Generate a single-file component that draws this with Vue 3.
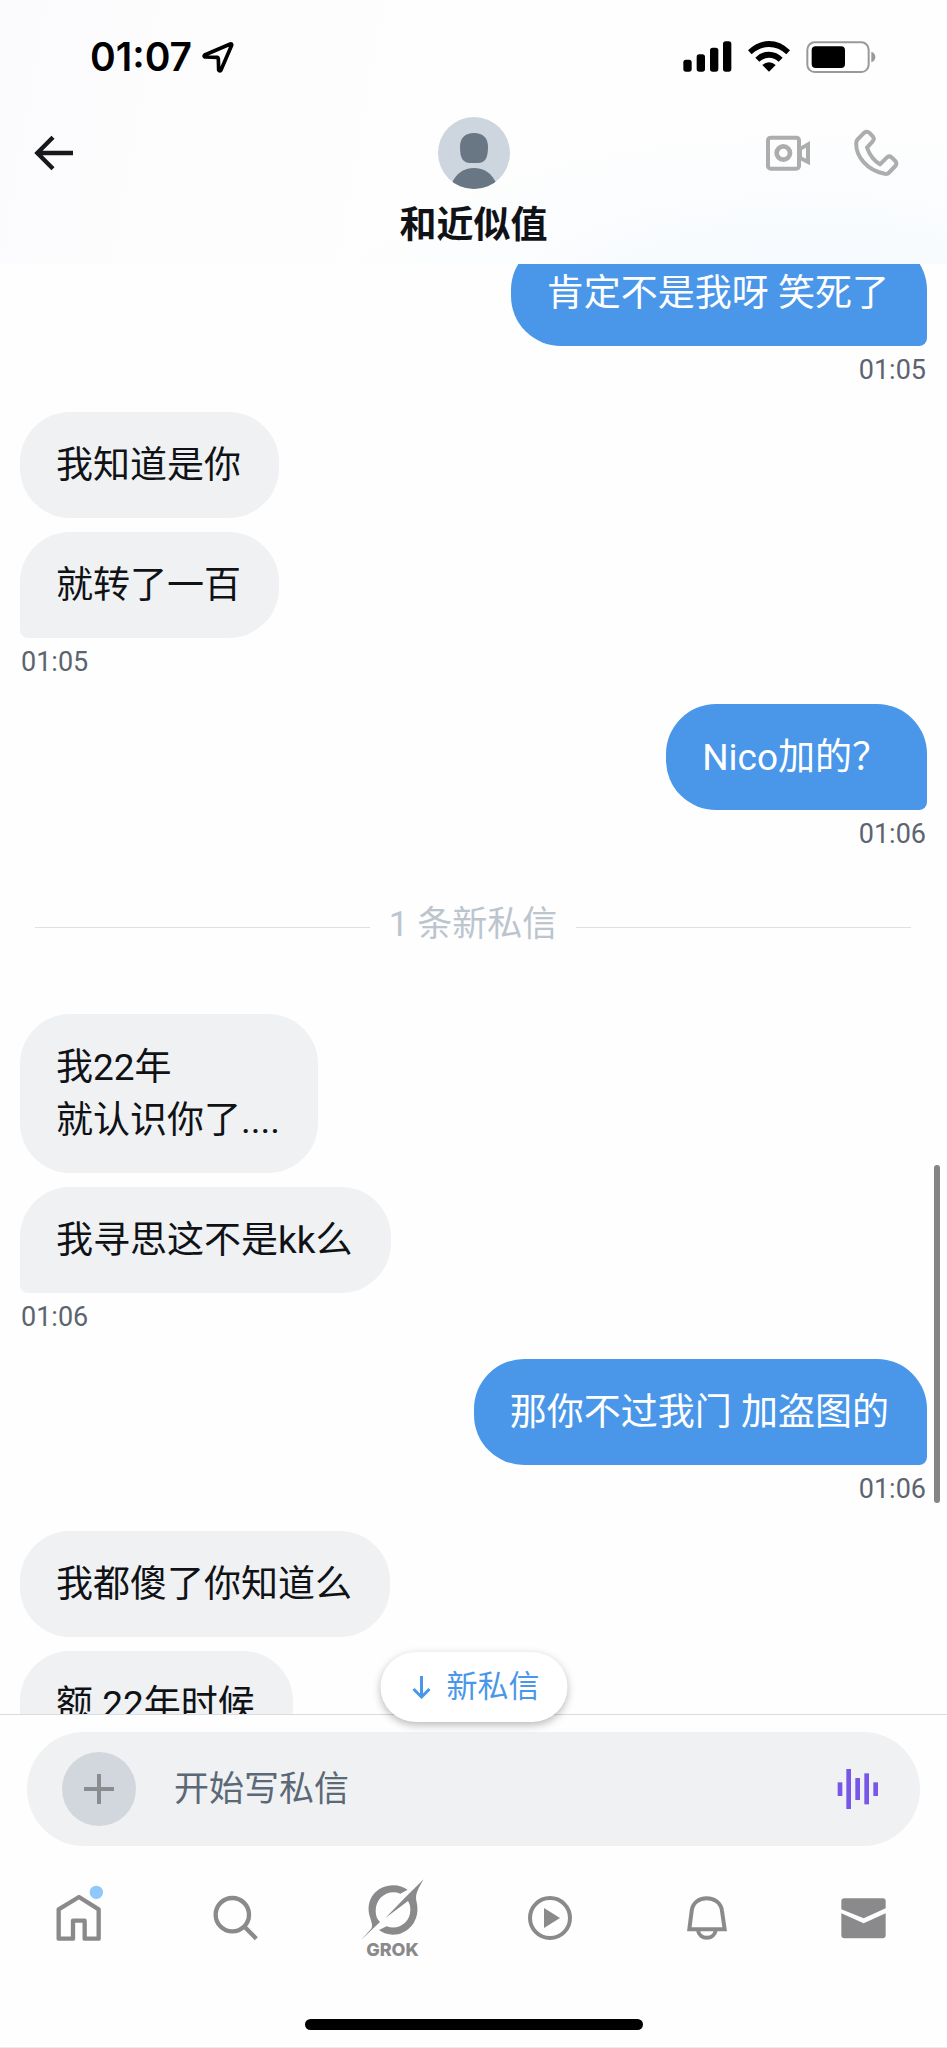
<script setup>
import { ref } from 'vue'

const draft = ref('')

const thread = [
  { id: 1, side: 'out', bubbles: ['肯定不是我呀 笑死了'], time: '01:05' },
  { id: 2, side: 'in', bubbles: ['我知道是你', '就转了一百'], time: '01:05' },
  { id: 3, side: 'out', bubbles: ['Nico加的？'], time: '01:06' },
  { id: 4, divider: '1 条新私信' },
  { id: 5, side: 'in', bubbles: ['我22年\n就认识你了....', '我寻思这不是kk么'], time: '01:06' },
  { id: 6, side: 'out', bubbles: ['那你不过我门 加盗图的'], time: '01:06' },
  { id: 7, side: 'in', bubbles: ['我都傻了你知道么', '额 22年时候'], time: '' },
]
</script>

<template>
  <div class="screen">
    <header class="header">
      <div class="status">
        <div class="clock">
          <span>01:07</span>
          <svg width="32" height="32" viewBox="0 0 96 96" aria-hidden="true">
            <path d="M85 9 L8 42 Q4 46 9 48 L46 49 Q49 50 49 53 L50 87 Q53 92 57 87 L89 13 Q90 8 85 9 Z" fill="none" stroke="#000" stroke-width="11" stroke-linejoin="round" />
          </svg>
        </div>
        <div class="signals">
          <svg width="49" height="31" viewBox="0 0 147 93" aria-hidden="true">
            <rect x="1" y="56" width="25" height="36" rx="8" />
            <rect x="41" y="40" width="25" height="52" rx="8" />
            <rect x="81" y="20" width="25" height="72" rx="8" />
            <rect x="120" y="1" width="25" height="91" rx="8" />
          </svg>
          <svg width="42" height="31" viewBox="0 0 126 93" aria-hidden="true">
            <path d="M0 28 Q28 0 63 0 Q98 0 126 28 L115 40 Q92 18 63 18 Q34 18 11 40 Z" />
            <path d="M22 50 Q39 32 63 32 Q87 32 104 50 L92 62 Q79 50 63 50 Q47 50 34 62 Z" />
            <path d="M43 72 Q52 64 63 64 Q74 64 83 72 L63 92 Z" />
          </svg>
          <svg width="70" height="32" viewBox="0 0 210 96" aria-hidden="true">
            <rect x="4" y="4" width="184" height="89" rx="22" fill="#fff" stroke="#999" stroke-width="6" />
            <rect x="17" y="16" width="100" height="65" rx="12" />
            <path d="M196 32 Q208 36 208 48 Q208 60 196 64 Z" fill="#999" />
          </svg>
        </div>
      </div>
      <div class="titlebar">
        <button class="icon-button back" type="button" aria-label="返回">
          <svg width="40" height="36" viewBox="0 0 120 108" aria-hidden="true">
            <path d="M117 54 H12 M57 7 L10 54 L57 101" fill="none" stroke="#16181c" stroke-width="13" />
          </svg>
        </button>
        <div class="person">
          <svg width="72" height="72" viewBox="0 0 72 72" aria-hidden="true">
            <defs><clipPath id="avatar-clip"><circle cx="36" cy="36" r="36" /></clipPath></defs>
            <g clip-path="url(#avatar-clip)">
              <rect width="72" height="72" fill="#cdd5de" />
              <path d="M36 16 C45 16 50 21 50 30 C50 41 47 46 40 46 H32 C25 46 22 41 22 30 C22 21 27 16 36 16 Z" fill="#697684" />
              <path d="M13 68 C18 56 26 51 36 51 C46 51 54 56 59 68 V74 H13 Z" fill="#697684" />
            </g>
          </svg>
          <h1 class="name">和近似值</h1>
        </div>
        <div class="actions">
          <button class="icon-button" type="button" aria-label="视频通话">
            <svg width="46" height="38" viewBox="0 0 138 114" aria-hidden="true">
              <g fill="none" stroke="#adadad" stroke-width="12">
                <rect x="9" y="11" width="93" height="93" rx="8" />
                <circle cx="55" cy="57" r="20" stroke-width="14" />
              </g>
              <path fill-rule="evenodd" d="M105 38 L135 21 V94 L105 78 Z M111 48 L123 41 V74 L111 68 Z" fill="#adadad" />
            </svg>
          </button>
          <button class="icon-button" type="button" aria-label="语音通话">
            <svg width="46" height="48" viewBox="1136 383 138 144" aria-hidden="true">
              <path d="M1151 413 L1170 394 Q1178 388 1186 395 L1196 406 Q1201 413 1195 420 L1178 439 Q1190 473 1217 489 L1237 469 Q1244 462 1252 468 L1263 479 Q1269 486 1263 494 L1243 515 Q1239 519 1231 517 C1180 508 1142 465 1146 422 Q1147 417 1151 413 Z" fill="none" stroke="#adadad" stroke-width="12" stroke-linejoin="round" />
            </svg>
          </button>
        </div>
      </div>
    </header>

    <main class="chat">
      <div class="thread">
        <template v-for="entry in thread" :key="entry.id">
          <div v-if="entry.divider" class="divider"><span>{{ entry.divider }}</span></div>
          <section v-else class="group" :class="entry.side">
            <p v-for="text in entry.bubbles" :key="text" class="bubble" :class="{ tail: entry.time && text === entry.bubbles[entry.bubbles.length - 1] }">{{ text }}</p>
            <time v-if="entry.time" class="time">{{ entry.time }}</time>
          </section>
        </template>
      </div>
      <div class="scrollbar"></div>
    </main>

    <footer class="footer">
      <button class="jump" type="button">
        <svg width="20" height="24" viewBox="0 0 20 24" aria-hidden="true">
          <path d="M10 1 V22 M2 14 L10 22 L18 14" fill="none" stroke="#4a97ea" stroke-width="3" />
        </svg>
        <span>新私信</span>
      </button>
      <form class="composer" @submit.prevent>
        <button class="add" type="button" aria-label="添加">
          <svg width="30" height="30" viewBox="0 0 30 30" aria-hidden="true">
            <path d="M15 0 V30 M0 15 H30" stroke="#8a8c90" stroke-width="4" />
          </svg>
        </button>
        <input v-model="draft" class="field" type="text" placeholder="开始写私信" aria-label="开始写私信" />
        <button class="icon-button" type="button" aria-label="语音私信">
          <svg width="42" height="40" viewBox="0 0 126 120" aria-hidden="true">
            <g fill="#7856e8">
              <rect x="2" y="40" width="14" height="41" />
              <rect x="28" y="0" width="14" height="120" />
              <rect x="55" y="27" width="14" height="66" />
              <rect x="82" y="13" width="14" height="93" />
              <rect x="109" y="40" width="14" height="41" />
            </g>
          </svg>
        </button>
      </form>
      <nav class="tabs">
        <a href="#home" aria-label="主页">
          <svg width="48" height="58" viewBox="163 520 144 174" aria-hidden="true" class="home">
            <path d="M174 596 L235 559 L294 596 V684 H252 V630 H217 V684 H174 Z" fill="none" stroke="#8a8a8c" stroke-width="13" stroke-linejoin="round" />
            <circle cx="287" cy="545" r="20" fill="#8fc8fa" />
          </svg>
        </a>
        <a href="#search" aria-label="搜索">
          <svg width="46" height="46" viewBox="636 553 138 138" aria-hidden="true">
            <path d="M732 650 L766 684" stroke="#8a8a8c" stroke-width="13" />
            <circle cx="694" cy="612" r="50" fill="none" stroke="#8a8a8c" stroke-width="13" />
          </svg>
        </a>
        <a href="#grok" class="grok">
          <svg width="66" height="64" viewBox="1079 502 198 192" aria-hidden="true">
            <g fill="#8a8a8c">
              <path d="M1082 688 L1112 655 C1119 646 1113 634 1109 620 C1092 566 1130 524 1178 524 C1196 524 1210 530 1222 537 L1200 549 C1165 535 1126 560 1126 600 C1126 615 1130 625 1139 634 Z" />
              <path d="M1270 506 C1254 534 1244 550 1248 570 C1264 632 1220 672 1178 672 C1162 672 1148 667 1136 658 L1159 647 C1195 660 1230 635 1230 598 C1230 588 1228 578 1223 571 L1155 622 L1213 562 Z" />
            </g>
          </svg>
          <span>GROK</span>
        </a>
        <a href="#video" aria-label="视频">
          <svg width="46" height="46" viewBox="0 0 46 46" aria-hidden="true">
            <circle cx="23" cy="23" r="20" fill="none" stroke="#8a8a8c" stroke-width="4" />
            <path d="M17 13 L33 23 L17 33 Z" fill="#8a8a8c" />
          </svg>
        </a>
        <a href="#notifications" aria-label="通知">
          <svg width="42" height="46" viewBox="635 554 126 138" aria-hidden="true">
            <g fill="none" stroke="#8a8a8c" stroke-width="12">
              <path d="M645 657 L652 602 C655 577 674 564 697 564 C720 564 740 577 743 602 L751 657 Z" />
              <path d="M671 660 C675 690 720 690 724 660" />
            </g>
          </svg>
        </a>
        <a href="#messages" aria-label="私信">
          <svg width="45" height="41" viewBox="1108 563 135 123" aria-hidden="true">
            <g fill="#8a8a8c">
              <path d="M1109 597 V573 Q1109 564 1118 564 H1233 Q1242 564 1242 573 V594 L1176 624 Z" />
              <path d="M1109 609 L1176 639 L1242 609 V675 Q1242 684 1233 684 H1118 Q1109 684 1109 675 Z" />
            </g>
          </svg>
        </a>
      </nav>
      <div class="home-indicator"></div>
    </footer>
  </div>
</template>

<style>
body {
  background: #fff;
}
</style>

<style scoped>
.screen {
  display: flex;
  flex-direction: column;
  height: 100vh;
  box-sizing: border-box;
  border-bottom: 1px solid #ebebeb;
  background: #fefefe;
  color: #101216;
  font-family: Roboto, "Noto Sans CJK SC", sans-serif;
}

.header {
  height: 264px;
  flex: none;
  background:
    radial-gradient(ellipse at 85% 115%, #f4f9fe 0%, rgba(244, 249, 254, 0) 42%),
    linear-gradient(100deg, #fbfbfd 0%, #fefefe 45%);
}

.status {
  display: flex;
  align-items: center;
  justify-content: space-between;
  height: 113px;
  padding: 0 71px 0 90px;
}

.clock {
  display: flex;
  align-items: center;
  gap: 10px;
  color: #000;
  font: 600 39px/48px Inter, sans-serif;
}

.signals {
  display: flex;
  align-items: center;
  gap: 16px;
}

.titlebar {
  display: grid;
  grid-template-columns: 1fr auto 1fr;
  padding: 4px 48px 0 34px;
}

.icon-button,
.add,
.jump {
  display: flex;
  align-items: center;
  justify-content: center;
  padding: 0;
  border: 0;
  background: none;
  cursor: pointer;
}

.back {
  height: 72px;
  justify-self: start;
}

.person {
  display: flex;
  flex-direction: column;
  align-items: center;
  /* balances the unequal side paddings */
  padding-left: 14px;
}

.name {
  margin: 12px 0 0;
  font-size: 37px;
  line-height: 50px;
  font-weight: 600;
}

.actions {
  display: flex;
  align-items: center;
  justify-content: flex-end;
  gap: 42px;
  height: 72px;
}

.chat {
  position: relative;
  flex: 1;
  min-height: 0;
  overflow: hidden;
}

/* the thread is scrolled part of a bubble under the header */
.thread {
  margin-top: -24px;
  padding: 0 20px;
}

.group {
  display: flex;
  flex-direction: column;
  align-items: flex-start;
  gap: 14px;
}

.group.out {
  align-items: flex-end;
}

.bubble {
  margin: 0;
  padding: 27px 38px 26px 36px;
  border-radius: 50px;
  background: #eff1f3;
  font-size: 37px;
  line-height: 53px;
  white-space: pre-line;
}

.out .bubble {
  background: #4a97ea;
  color: #fff;
}

.in .tail {
  border-bottom-left-radius: 8px;
}

.out .tail {
  border-bottom-right-radius: 8px;
}

.time {
  height: 52px;
  padding: 0 1px;
  color: #5c6470;
  font-size: 27px;
  line-height: 20px;
}

.divider {
  display: flex;
  align-items: center;
  gap: 19px;
  height: 102px;
  margin: 0 16px 36px 15px;
  color: #bcc5ce;
  font-size: 35px;
  line-height: 48px;
}

.divider span {
  padding-bottom: 4px;
}

.divider::before,
.divider::after {
  content: "";
  flex: 1;
  height: 1px;
  background: #dde1e4;
}

.scrollbar {
  position: absolute;
  right: 7px;
  bottom: 211px;
  width: 6px;
  height: 338px;
  border-radius: 3px;
  background: #858585;
}

.footer {
  position: relative;
  flex: none;
  border-top: 1px solid #d9dbde;
  background: #fefefe;
}

.jump {
  position: absolute;
  left: 50%;
  bottom: calc(100% - 7px);
  gap: 15px;
  width: 187px;
  height: 70px;
  padding-left: 4px;
  border-radius: 35px;
  background: #fff;
  box-shadow: 0 3px 8px rgba(0, 0, 0, 0.28);
  color: #4a97ea;
  font: 31px/40px Roboto, "Noto Sans CJK SC", sans-serif;
  transform: translateX(-50%);
}

.composer {
  display: flex;
  align-items: center;
  height: 114px;
  margin: 17px 27px 0;
  padding: 0 41px 0 35px;
  box-sizing: border-box;
  border-radius: 57px;
  background: #eff1f3;
}

.add {
  flex: none;
  width: 74px;
  height: 74px;
  border-radius: 50%;
  background: #d2d7de;
}

.field {
  flex: 1;
  min-width: 0;
  height: 60px;
  margin: 0 20px 0 38px;
  padding: 0;
  border: 0;
  outline: 0;
  background: none;
  color: #101216;
  font: 35px/48px Roboto, "Noto Sans CJK SC", sans-serif;
}

.field::placeholder {
  color: #5b6876;
  opacity: 1;
}

.tabs {
  display: grid;
  grid-template-columns: repeat(6, 1fr);
  height: 144px;
  padding-right: 5px;
}

.tabs a {
  display: flex;
  align-items: center;
  justify-content: center;
  color: #8a8a8c;
  text-decoration: none;
}

.tabs .home {
  margin-bottom: 10px;
}

.tabs .grok {
  flex-direction: column;
  font: 800 18px/16px Inter, sans-serif;
}

.home-indicator {
  width: 338px;
  height: 11px;
  margin: 29px auto 17px;
  border-radius: 6px;
  background: #000;
}
</style>
